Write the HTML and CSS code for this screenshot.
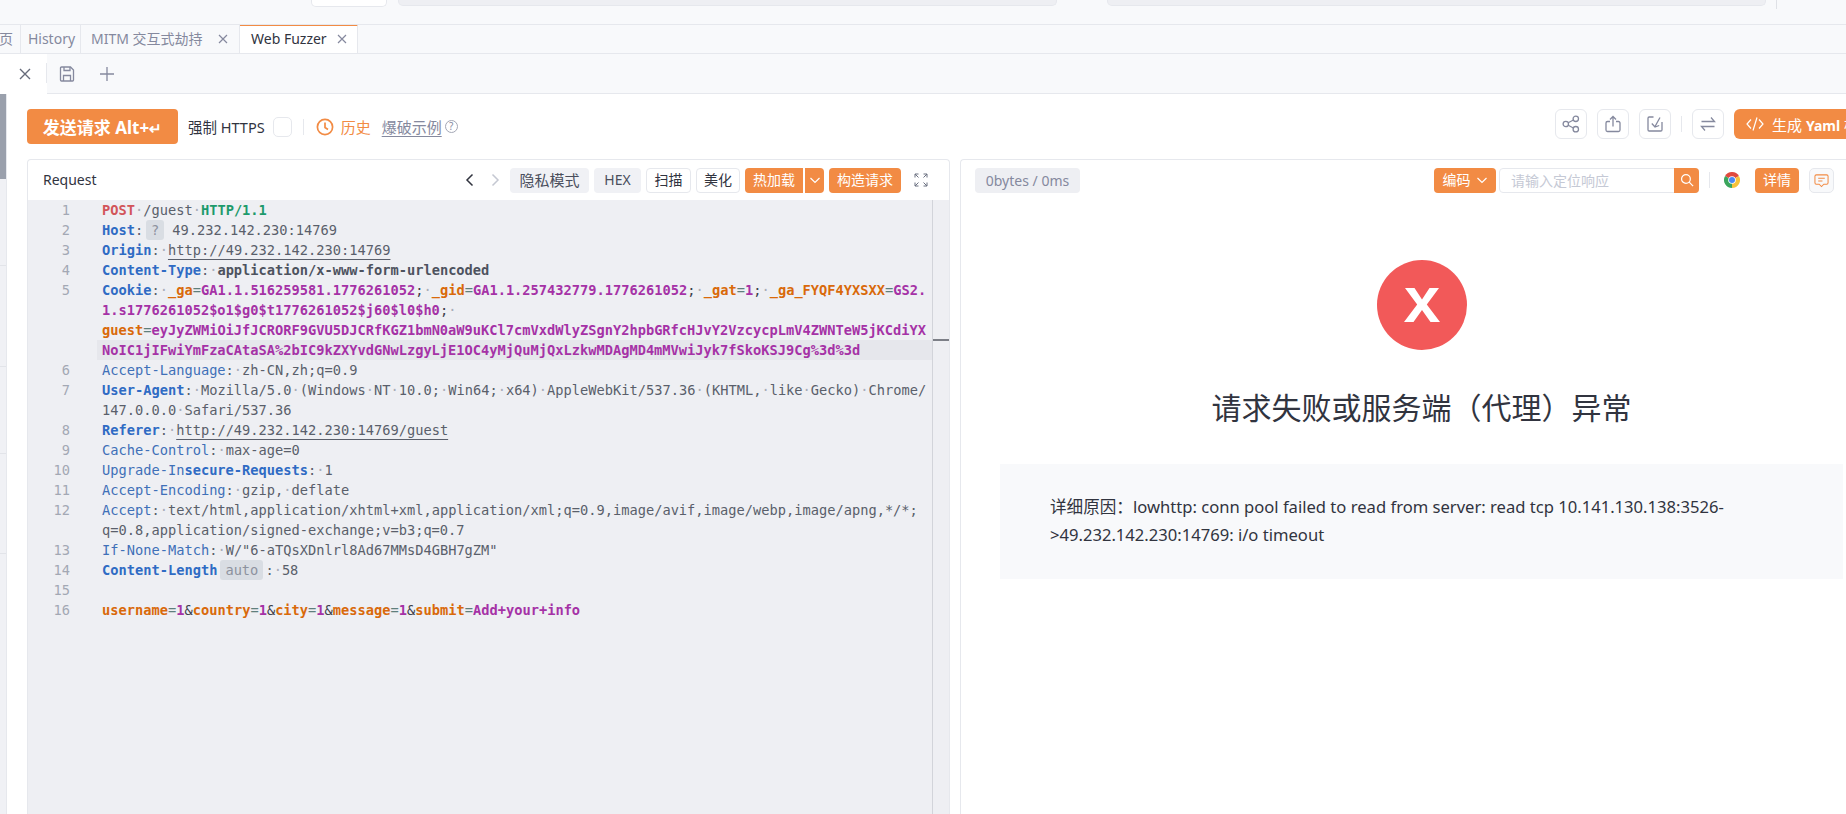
FILE: index.html
```html
<!DOCTYPE html>
<html lang="zh-CN">
<head>
<meta charset="utf-8">
<title>Web Fuzzer</title>
<link rel="stylesheet" href="styles.css">
</head>
<body>
<div class="app">
  <div class="topbar">
    <div class="field field-white"></div>
    <div class="field field-gray"></div>
    <div class="field field-gray field-next"></div>
    <div class="topsep"></div>
  </div>

  <div class="tabs">
    <div class="tab tab-clip">首页</div>
    <div class="tab tab-history">History</div>
    <div class="tab tab-mitm">MITM 交互式劫持<svg class="tabx" viewBox="0 0 12 12"><path d="M2 2l8 8M10 2l-8 8"/></svg></div>
    <div class="tab tab-active">Web Fuzzer<svg class="tabx" viewBox="0 0 12 12"><path d="M2 2l8 8M10 2l-8 8"/></svg></div>
  </div>

  <div class="subbar">
    <div class="subtab"><svg class="subx" viewBox="0 0 14 14"><path d="M2 2l10 10M12 2L2 12"/></svg></div>
    <svg class="saveicon" viewBox="0 0 16 16"><path d="M2.500 1h9l3 3v10a1 1 0 0 1-1 1h-11a1 1 0 0 1-1-1V2a1 1 0 0 1 1-1z"/><path d="M5 1v3.500h6V1M4.500 15V9.500h7V15"/></svg>
    <svg class="plusicon" viewBox="0 0 16 16"><path d="M8 1v14M1 8h14"/></svg>
  </div>

  <div class="main">
    <div class="rail">
      <div class="rail-thumb"></div>
      <div class="rail-a"></div>
      <div class="rail-b"></div>
      <div class="rail-c"></div>
      <div class="rail-d"></div>
    </div>

    <div class="content">
      <div class="toolbar">
        <div class="tool-left">
          <button class="send">发送请求 Alt+<span class="ret">↵</span></button>
          <span class="lbl lbl-https">强制 HTTPS</span>
          <span class="check"></span>
          <span class="vsep vsep-left"></span>
          <svg class="clock" viewBox="0 0 18 18"><circle cx="9" cy="9" r="7.600"/><path d="M9 4.500V9.500l3 2"/></svg>
          <span class="hist">历史</span>
          <span class="example">爆破示例</span>
          <span class="help">?</span>
        </div>
        <div class="tool-right">
          <span class="iconbtn"><svg viewBox="0 0 18 18"><circle cx="3.800" cy="9" r="2.700"/><circle cx="13.800" cy="3.800" r="2.700"/><circle cx="13.800" cy="14.200" r="2.700"/><path d="M6.200 7.800l5.200-2.800M6.200 10.200l5.200 2.800"/></svg></span>
          <span class="iconbtn"><svg viewBox="0 0 18 18"><path d="M6 6.500H3.500A1.500 1.500 0 0 0 2 8v7a1.500 1.500 0 0 0 1.500 1.500h11A1.500 1.500 0 0 0 16 15V8a1.500 1.500 0 0 0-1.500-1.500H12"/><path d="M9 11.500V1.500M6 4.500l3-3 3 3"/></svg></span>
          <span class="iconbtn"><svg viewBox="0 0 18 18"><path d="M7.500 2H3.200A1.200 1.200 0 0 0 2 3.200v11.600A1.200 1.200 0 0 0 3.200 16h11.600a1.200 1.200 0 0 0 1.200-1.200V7"/><path d="M14 2.500L9 11.500M5.800 8.500L9 12l4.200-1.500"/></svg></span>
          <span class="vsep vsep-right"></span>
          <span class="iconbtn"><svg viewBox="0 0 18 18"><path d="M2.500 6.500H15.500L12 2.500M15.500 11.500H2.500L6 15.500"/></svg></span>
          <button class="yaml"><svg class="codeicon" viewBox="0 0 18 16"><path d="M5 3.500L1 8l4 4.500M13 3.500l4 4.500-4 4.500M11 1.500L7 14.500"/></svg><span>生成 <b class="yamlword">Yaml</b> 模板</span></button>
        </div>
      </div>

      <div class="panels">
        <section class="card card-left">
          <header class="req-head">
            <span class="req-title">Request</span>
            <div class="req-tools">
              <svg class="chev" viewBox="0 0 16 16"><path d="M10.500 2.500L5 8l5.500 5.500"/></svg>
              <svg class="chev chev-off" viewBox="0 0 16 16"><path d="M5.500 2.500L11 8l-5.500 5.500"/></svg>
              <span class="btn btn-gray btn-priv">隐私模式</span>
              <span class="btn btn-gray btn-hex">HEX</span>
              <span class="btn btn-line btn-scan">扫描</span>
              <span class="btn btn-line btn-pretty">美化</span>
              <div class="split">
                <span class="btn btn-orange btn-hot">热加载</span>
                <span class="btn btn-orange btn-drop"><svg class="dropicon" viewBox="0 0 12 12"><path d="M1.500 4L6 8.500 10.500 4"/></svg></span>
              </div>
              <span class="btn btn-orange btn-build">构造请求</span>
              <svg class="full" viewBox="0 0 14 14"><path d="M1 4.500V1h3.500M1 1l3.500 3.500M13 4.500V1H9.500M13 1L9.500 4.500M1 9.500V13h3.500M1 13l3.500-3.500M13 9.500V13H9.500M13 13L9.500 9.500"/></svg>
            </div>
          </header>
          <div class="editor">
            <div class="code">
              <div class="ln"><span class="no">1</span><span class="tx"><span class="m">POST</span><span class="w">·</span><span class="v">/guest</span><span class="w">·</span><span class="h">HTTP/1.1</span></span></div>
              <div class="ln"><span class="no">2</span><span class="tx"><span class="k">Host</span><span class="c">:</span><span class="chip chip-q">?</span><span class="v">49.232.142.230:14769</span></span></div>
              <div class="ln"><span class="no">3</span><span class="tx"><span class="k">Origin</span><span class="c">:</span><span class="w">·</span><span class="u">http://49.232.142.230:14769</span></span></div>
              <div class="ln"><span class="no">4</span><span class="tx"><span class="k">Content-Type</span><span class="c">:</span><span class="w">·</span><span class="b">application/x-www-form-urlencoded</span></span></div>
              <div class="ln"><span class="no">5</span><span class="tx"><span class="k">Cookie</span><span class="c">:</span><span class="w">·</span><span class="o">_ga</span><span class="e">=</span><span class="p">GA1.1.516259581.1776261052</span><span class="d">;</span><span class="w">·</span><span class="o">_gid</span><span class="e">=</span><span class="p">GA1.1.257432779.1776261052</span><span class="d">;</span><span class="w">·</span><span class="o">_gat</span><span class="e">=</span><span class="p">1</span><span class="d">;</span><span class="w">·</span><span class="o">_ga_FYQF4YXSXX</span><span class="e">=</span><span class="p">GS2.</span></span></div>
              <div class="ln"><span class="no"></span><span class="tx"><span class="p">1.s1776261052$o1$g0$t1776261052$j60$l0$h0</span><span class="d">;</span><span class="w">·</span></span></div>
              <div class="ln"><span class="no"></span><span class="tx"><span class="o">guest</span><span class="e">=</span><span class="p">eyJyZWMiOiJfJCRORF9GVU5DJCRfKGZ1bmN0aW9uKCl7cmVxdWlyZSgnY2hpbGRfcHJvY2VzcycpLmV4ZWNTeW5jKCdiYX</span></span></div>
              <div class="ln"><span class="no"></span><span class="tx tx-hl"><span class="p">NoIC1jIFwiYmFzaCAtaSA%2bIC9kZXYvdGNwLzgyLjE1OC4yMjQuMjQxLzkwMDAgMD4mMVwiJyk7fSkoKSJ9Cg%3d%3d</span></span></div>
              <div class="ln"><span class="no">6</span><span class="tx"><span class="l">Accept-Language</span><span class="c">:</span><span class="w">·</span><span class="v">zh-CN,zh;q=0.9</span></span></div>
              <div class="ln"><span class="no">7</span><span class="tx"><span class="k">User-Agent</span><span class="c">:</span><span class="w">·</span><span class="v">Mozilla/5.0</span><span class="w">·</span><span class="v">(Windows</span><span class="w">·</span><span class="v">NT</span><span class="w">·</span><span class="v">10.0;</span><span class="w">·</span><span class="v">Win64;</span><span class="w">·</span><span class="v">x64)</span><span class="w">·</span><span class="v">AppleWebKit/537.36</span><span class="w">·</span><span class="v">(KHTML,</span><span class="w">·</span><span class="v">like</span><span class="w">·</span><span class="v">Gecko)</span><span class="w">·</span><span class="v">Chrome/</span></span></div>
              <div class="ln"><span class="no"></span><span class="tx"><span class="v">147.0.0.0</span><span class="w">·</span><span class="v">Safari/537.36</span></span></div>
              <div class="ln"><span class="no">8</span><span class="tx"><span class="k">Referer</span><span class="c">:</span><span class="w">·</span><span class="u">http://49.232.142.230:14769/guest</span></span></div>
              <div class="ln"><span class="no">9</span><span class="tx"><span class="l">Cache-Control</span><span class="c">:</span><span class="w">·</span><span class="v">max-age=0</span></span></div>
              <div class="ln"><span class="no">10</span><span class="tx"><span class="l">Upgrade-In</span><span class="k">secure-Requests</span><span class="c">:</span><span class="w">·</span><span class="v">1</span></span></div>
              <div class="ln"><span class="no">11</span><span class="tx"><span class="l">Accept-Encoding</span><span class="c">:</span><span class="w">·</span><span class="v">gzip,</span><span class="w">·</span><span class="v">deflate</span></span></div>
              <div class="ln"><span class="no">12</span><span class="tx"><span class="l">Accept</span><span class="c">:</span><span class="w">·</span><span class="v">text/html,application/xhtml+xml,application/xml;q=0.9,image/avif,image/webp,image/apng,*/*;</span></span></div>
              <div class="ln"><span class="no"></span><span class="tx"><span class="v">q=0.8,application/signed-exchange;v=b3;q=0.7</span></span></div>
              <div class="ln"><span class="no">13</span><span class="tx"><span class="l">If-None-Match</span><span class="c">:</span><span class="w">·</span><span class="v">W/"6-aTQsXDnlrl8Ad67MMsD4GBH7gZM"</span></span></div>
              <div class="ln"><span class="no">14</span><span class="tx"><span class="k">Content-Length</span><span class="chip chip-auto">auto</span><span class="c">:</span><span class="w">·</span><span class="v">58</span></span></div>
              <div class="ln"><span class="no">15</span><span class="tx"></span></div>
              <div class="ln"><span class="no">16</span><span class="tx"><span class="o">username</span><span class="e">=</span><span class="p">1</span><span class="d">&amp;</span><span class="o">country</span><span class="e">=</span><span class="p">1</span><span class="d">&amp;</span><span class="o">city</span><span class="e">=</span><span class="p">1</span><span class="d">&amp;</span><span class="o">message</span><span class="e">=</span><span class="p">1</span><span class="d">&amp;</span><span class="o">submit</span><span class="e">=</span><span class="p">Add+your+info</span></span></div>
            </div>
            <div class="minimap"><div class="mark"></div></div>
          </div>
        </section>

        <section class="card card-right">
          <header class="res-head">
            <span class="size">0bytes / 0ms</span>
            <div class="res-tools">
              <span class="btn btn-orange btn-enc">编码<svg class="dropicon" viewBox="0 0 12 12"><path d="M1.500 4L6 8.500 10.500 4"/></svg></span>
              <div class="search">
                <span class="ph">请输入定位响应</span>
                <span class="searchbtn"><svg viewBox="0 0 16 16"><circle cx="6.800" cy="6.800" r="5"/><path d="M10.500 10.500L15 15"/></svg></span>
              </div>
              <span class="vsep vsep-res"></span>
              <svg class="chrome" viewBox="0 0 16 16"><path fill="#e0493e" d="M8 8L1.070 4A8 8 0 0 1 14.930 4z"/><path fill="#f6c33b" d="M8 8L14.930 4A8 8 0 0 1 8 16z"/><path fill="#3ba55d" d="M8 8L8 16A8 8 0 0 1 1.070 4z"/><circle cx="8" cy="8" r="3.800" fill="#fff"/><circle cx="8" cy="8" r="3" fill="#4a89f3"/></svg>
              <span class="btn btn-orange btn-detail">详情</span>
              <span class="chat"><svg viewBox="0 0 16 16"><path d="M2.500 2h11A1.500 1.500 0 0 1 15 3.500v7a1.500 1.500 0 0 1-1.500 1.500H10.500L8 14.500 5.500 12h-3A1.500 1.500 0 0 1 1 10.500v-7A1.500 1.500 0 0 1 2.500 2z"/><path d="M4.500 5.500h7M4.500 8.500h4.500"/></svg></span>
            </div>
          </header>
          <div class="res-body">
            <div class="err-circle"><svg viewBox="0 0 36 34"><path d="M1 0h9.500L18 11.500 25.500 0H35L22.800 16.500 36 34h-9.500L18 22 9.500 34H0l13.200-17.500z"/></svg></div>
            <h1 class="err-title">请求失败或服务端（代理）异常</h1>
            <div class="err-box">详细原因：lowhttp: conn pool failed to read from server: read tcp 10.141.130.138:3526-<br>&gt;49.232.142.230:14769: i/o timeout</div>
          </div>
        </section>
      </div>
    </div>
  </div>
</div>
</body>
</html>
```

FILE: styles.css
```css
* { box-sizing: border-box; }
html, body { margin: 0; padding: 0; height: 100%; overflow: hidden; background: #fff; }
body { font-family: "Noto Sans", "Noto Sans CJK SC", sans-serif; font-size: 14px; color: #31343f; }
svg { display: block; flex-shrink: 0; }
button { font-family: inherit; border: 0; padding: 0; }

.app { width: 1846px; height: 814px; overflow: hidden; display: flex; flex-direction: column; }

/* top */
.topbar { height: 25px; flex-shrink: 0; background: #f8f9fb; border-bottom: 1px solid #e6e8ed; display: flex; align-items: flex-start; padding-left: 311px; }
.field { height: 7px; border-radius: 0 0 5px 5px; }
.field-white { width: 76px; background: #fff; border: 1px solid #e6e8ed; border-top: 0; margin-right: 11px; }
.field-gray { width: 659px; height: 6px; background: #eeeff3; border: 1px solid #e6e8ed; border-top: 0; }
.field-next { margin-left: 50px; }
.topsep { width: 1px; height: 9px; background: #dfe1e6; margin-left: 10px; }

.tabs { height: 29px; flex-shrink: 0; background: #f8f9fb; border-bottom: 1px solid #e6e8ed; display: flex; overflow: hidden; }
.tab { display: flex; align-items: center; height: 28px; color: #85899e; border-right: 1px solid #e6e8ed; line-height: 1; white-space: nowrap; }
.tab-clip { width: 21px; justify-content: flex-end; padding-right: 7px; }
.tab-history { width: 60px; justify-content: center; padding-left: 2px; }
.tab-mitm { width: 159px; padding-left: 10px; }
.tab-mitm .tabx { margin-left: 14px; }
.tab-active { width: 118px; margin-top: -1px; height: 29px; padding-left: 11px; padding-bottom: 1px; color: #31343f; background: #fff; border-top: 2px solid #f28b44; border-right-color: #e6e8ed; }
.tabx { width: 12px; height: 12px; margin-left: 9px; fill: none; stroke: #85899e; stroke-width: 1.200; }

.subbar { height: 40px; flex-shrink: 0; background: #f8f9fb; border-bottom: 1px solid #e6e8ed; display: flex; align-items: center; }
.subtab { width: 47px; height: 40px; margin-bottom: -1px; background: #fff; display: flex; align-items: center; padding-left: 18px; position: relative; }
.subtab::after { content: ""; position: absolute; right: 0; top: 9px; width: 1px; height: 20px; background: #e6e8ed; }
.subx { width: 14px; height: 14px; fill: none; stroke: #666b7a; stroke-width: 1.400; }
.saveicon { width: 16px; height: 16px; margin-left: 12px; fill: none; stroke: #85899e; stroke-width: 1.300; }
.plusicon { width: 16px; height: 16px; margin-left: 24px; fill: none; stroke: #85899e; stroke-width: 1.300; }

/* main */
.main { flex: 1; min-height: 0; display: flex; background: #fff; }
.rail { width: 7px; flex-shrink: 0; background: #f0f1f5; border-right: 1px solid #e6e8ed; display: flex; flex-direction: column; }
.rail-thumb { height: 85px; background: #9aa0ac; }
.rail-a { height: 87px; border-bottom: 1px solid #e2e4e9; }
.rail-b { height: 101px; border-bottom: 1px solid #e2e4e9; }
.rail-c { height: 87px; border-bottom: 1px solid #e2e4e9; }
.rail-d { height: 100px; border-bottom: 1px solid #e2e4e9; }

.content { width: 1875px; flex-shrink: 0; padding: 15px 0 0 20px; display: flex; flex-direction: column; min-height: 0; }

.toolbar { height: 35px; flex-shrink: 0; margin-bottom: 15px; display: flex; justify-content: space-between; align-items: flex-start; }
.tool-left { display: flex; align-items: center; height: 35px; }
.send { width: 151px; height: 35px; border-radius: 4px; background: #f28b44; color: #fff; font-size: 17px; font-weight: 700; text-align: center; white-space: nowrap; }
.ret { font-size: 15px; }
.lbl-https { margin-left: 10px; font-size: 14.500px; }
.check { width: 19px; height: 20px; margin-left: 8px; border: 1px solid #e6e8ed; border-radius: 5px; background: #fff; }
.vsep { display: block; width: 1px; height: 16px; background: #e6e8ed; flex-shrink: 0; }
.vsep-left { margin-left: 11px; }
.clock { width: 18px; height: 18px; margin-left: 12px; fill: none; stroke: #f28b44; stroke-width: 1.700; }
.hist { margin-left: 7px; color: #f28b44; font-size: 15px; }
.example { margin-left: 11px; color: #85899e; font-size: 15px; text-decoration: underline; text-underline-offset: 3px; }
.help { width: 13px; height: 13px; margin-left: 3px; border: 1px solid #a3a7b5; border-radius: 50%; color: #85899e; font-size: 10px; line-height: 11px; text-align: center; }

.tool-right { display: flex; align-items: flex-start; }
.iconbtn { width: 32px; height: 30px; margin-right: 10px; border: 1px solid #e6e8ed; border-radius: 6px; background: #fff; display: flex; align-items: center; justify-content: center; }
.iconbtn svg { width: 18px; height: 18px; fill: none; stroke: #85899e; stroke-width: 1.300; }
.vsep-right { height: 16px; margin: 7px 10px 0 0; }
.yaml { width: 148px; height: 30px; border-radius: 6px; background: #f28b44; color: #fff; font-size: 15px; display: flex; align-items: center; padding-left: 12px; white-space: nowrap; }
.yamlword { font-weight: 700; font-size: 14px; }
.codeicon { width: 18px; height: 16px; margin-right: 8px; fill: none; stroke: #fff; stroke-width: 1.200; }

.panels { flex: 1; min-height: 0; display: grid; grid-template-columns: 923px 922px; column-gap: 10px; }
.card { background: #fff; border: 1px solid #e6e8ed; border-bottom: 0; border-radius: 4px 4px 0 0; display: flex; flex-direction: column; min-height: 0; overflow: hidden; }

.req-head { height: 40px; flex-shrink: 0; display: flex; align-items: center; justify-content: space-between; padding: 0 21px 0 15px; }
.req-title { font-size: 14px; color: #31343f; margin-bottom: 2px; }
.req-tools { display: flex; align-items: center; }
.chev { width: 16px; height: 16px; margin-right: 9px; fill: none; stroke: #31343f; stroke-width: 1.500; }
.chev-off { stroke: #c5c8d2; margin-right: 7px; }
.btn { height: 25px; border-radius: 4px; display: flex; align-items: center; justify-content: center; margin-right: 5px; font-size: 14px; line-height: 1; white-space: nowrap; }
.btn-gray { background: #f0f1f5; color: #4a4e5c; }
.btn-line { background: #fff; border: 1px solid #e6e8ed; color: #31343f; }
.btn-orange { background: #f28b44; color: #fff; }
.btn-priv { width: 79px; font-size: 15px; }
.btn-hex { width: 47px; }
.btn-scan { width: 45px; }
.btn-pretty { width: 44px; }
.split { display: flex; }
.btn-hot { width: 58px; margin-right: 2px; border-radius: 4px 0 0 4px; }
.btn-drop { width: 19px; border-radius: 0 4px 4px 0; }
.dropicon { width: 12px; height: 12px; fill: none; stroke: #fff; stroke-width: 1.200; }
.btn-build { width: 72px; margin-right: 13px; }
.full { width: 14px; height: 14px; fill: none; stroke: #6b7080; stroke-width: 1; }

/* editor */
.editor { flex: 1; min-height: 0; display: flex; background: #eeeff3; }
.code { flex: 1; min-width: 0; font-family: "DejaVu Sans Mono", "Liberation Mono", monospace; font-size: 13.700px; line-height: 20px; }
.ln { display: flex; height: 20px; white-space: pre; }
.no { width: 69px; flex-shrink: 0; text-align: right; padding-right: 27px; color: #a3a8b4; }
.tx { flex: 1; padding-left: 5px; min-width: 0; }
.tx-hl { background: #e6e7ec; }
.minimap { width: 17px; flex-shrink: 0; border-left: 1px solid #d2d4da; padding-top: 139px; }
.mark { height: 2px; background: #7c7f87; }

.m { color: #d2555a; font-weight: 700; }
.h { color: #1d9a6c; font-weight: 700; }
.k { color: #2f6bc4; font-weight: 700; }
.l { color: #3f70b8; }
.c { color: #5a5f6b; }
.w { color: #a9adb8; }
.v { color: #5a5f6b; }
.b { color: #4d525e; font-weight: 700; }
.u { color: #5a5f6b; text-decoration: underline; text-underline-offset: 4px; text-decoration-thickness: 1px; }
.o { color: #d9690a; font-weight: 700; }
.p { color: #a532a6; font-weight: 700; }
.e { color: #5f7f7c; }
.d { color: #3d414c; }
.chip { display: inline-block; height: 20px; line-height: 20px; background: #d9dde3; color: #8d929e; border-radius: 3px; text-align: center; }
.chip-q { width: 18px; margin: 0 8px 0 3px; }
.chip-auto { width: 43px; margin: 0 2px 0 3px; }

/* response */
.card-right { border-right: 0; }
.res-head { height: 40px; flex-shrink: 0; display: flex; align-items: center; justify-content: space-between; padding: 0 48px 0 14px; }
.size { width: 105px; height: 25px; border-radius: 4px; background: #eeeff3; color: #85899e; display: flex; align-items: center; justify-content: center; font-size: 14px; white-space: nowrap; }
.res-tools { display: flex; align-items: center; }
.btn-enc { width: 62px; margin-right: 3px; gap: 5px; }
.search { width: 200px; height: 25px; border: 1px solid #e6e8ed; border-radius: 4px; display: flex; justify-content: space-between; align-items: center; padding-left: 11px; background: #fff; }
.ph { color: #c5c9d5; font-size: 14px; }
.searchbtn { width: 25px; height: 25px; margin: -1px; background: #f28b44; border-radius: 0 4px 4px 0; display: flex; align-items: center; justify-content: center; }
.searchbtn svg { width: 14px; height: 14px; fill: none; stroke: #fff; stroke-width: 1.400; }
.vsep-res { margin: 0 14px 0 10px; }
.chrome { width: 16px; height: 16px; margin-right: 15px; }
.btn-detail { width: 44px; margin-right: 10px; }
.chat { width: 25px; height: 25px; border: 1px solid #e6e8ed; border-radius: 5px; background: #f8f9fb; display: flex; align-items: center; justify-content: center; }
.chat svg { width: 15px; height: 15px; fill: none; stroke: #f28b44; stroke-width: 1.100; }

.res-body { flex: 1; min-height: 0; padding: 60px 39px 0 39px; display: flex; flex-direction: column; align-items: center; }
.err-circle { width: 90px; height: 90px; border-radius: 50%; background: #f25959; display: flex; align-items: center; justify-content: center; flex-shrink: 0; }
.err-circle svg { width: 36px; height: 34px; fill: #fff; }
.err-title { margin: 38px 0 36px; font-size: 30px; line-height: 40px; font-weight: 400; color: #31343f; white-space: nowrap; }
.err-box { width: 100%; height: 115px; padding: 29px 50px 0; background: #f8f9fb; font-size: 16.600px; line-height: 28px; color: #31343f; white-space: nowrap; }
```
